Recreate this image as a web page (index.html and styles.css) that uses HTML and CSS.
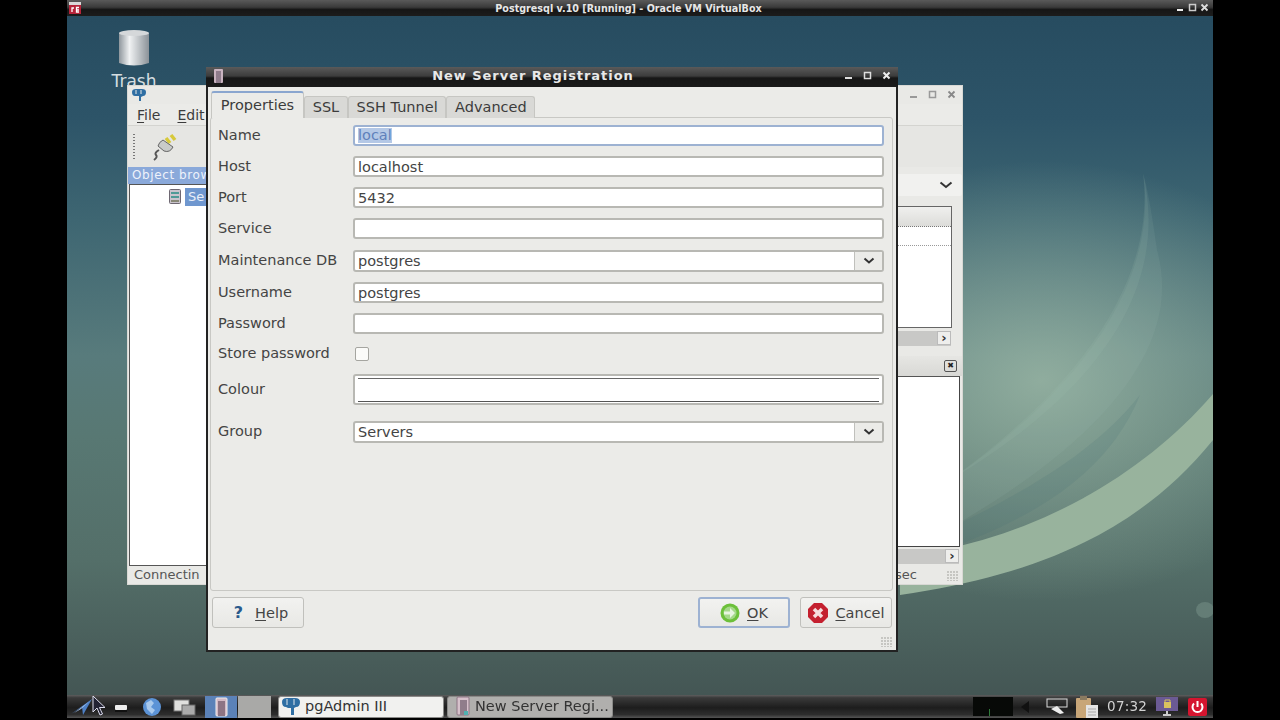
FILE: index.html
```html
<!DOCTYPE html>
<html lang="en">
<head>
    <meta charset="UTF-8">
    <meta name="viewport" content="width=device-width, initial-scale=1.0">
    <title>Postgresql v.10 [Running] - Oracle VM VirtualBox</title>
    <link rel="stylesheet" href="styles.css">
</head>
<body>
    <div class="vm">
        <div class="vm-title">
            <svg class="vm-icon" width="12" height="12" viewBox="0 0 12 12"><rect width="12" height="12" fill="#d8d8d8"/><rect y="3" width="12" height="9" fill="#b5243a"/><path d="M3 10V6h2M7 8h3M10 5.500H7.500V10H10" fill="none" stroke="#fff" stroke-width="1.300"/></svg>
            <span class="vm-title-text">Postgresql v.10 [Running] - Oracle VM VirtualBox</span>
            <div class="vm-controls">
                <svg width="10" height="10" viewBox="0 0 10 10"><rect x="3" y="6" width="6" height="2" fill="#eee"/></svg>
                <svg width="10" height="10" viewBox="0 0 10 10"><rect x="2.500" y="1.500" width="6" height="6" fill="none" stroke="#ccc" stroke-width="1.500"/></svg>
                <svg width="10" height="10" viewBox="0 0 10 10"><path d="M1.500 1.500l6 6M7.500 1.500l-6 6" stroke="#ddd" stroke-width="1.800"/></svg>
            </div>
        </div>

        <div class="desktop">
            <svg class="wallpaper" width="1146" height="680" viewBox="67 16 1146 680">
                <path d="M1143 173C1158 270 1095 380 950 480L950 528C1095 445 1185 350 1157 250C1152 215 1148 190 1143 173Z" fill="#a8c4b8" opacity=".1"/>
                <path d="M1143 173C1155 270 1095 375 950 480C1110 385 1168 280 1143 173Z" fill="#a8c4b8" opacity=".12"/>
                <path d="M950 528C1040 485 1100 445 1140 395C1110 470 1040 515 950 548Z" fill="#3f6b70" opacity=".14"/>
                <path d="M900 556C1010 545 1130 490 1213 394V440C1140 530 1040 575 900 595Z" fill="#98b39d"/>
                <ellipse cx="1205" cy="610" rx="9" ry="8" fill="#647d76"/>
            </svg>

            <div class="trash">
                <svg width="34" height="38" viewBox="0 0 34 38">
                    <defs><linearGradient id="can" x1="0" x2="1" y1="0" y2="0"><stop offset="0" stop-color="#8f979d"/><stop offset=".35" stop-color="#f0f2f3"/><stop offset="1" stop-color="#8b9298"/></linearGradient></defs>
                    <path d="M2 4V34Q17 39 32 34V4Z" fill="url(#can)"/>
                    <ellipse cx="17" cy="4" rx="15" ry="3" fill="#d5d8da"/>
                </svg>
                <span>Trash</span>
            </div>

            <div class="main-win">
                <div class="main-title">
                    <svg width="16" height="14" viewBox="0 0 16 14"><path d="M1 4Q1 1 5 1H11Q15 1 15 4Q15 8 12 8L10 9V13H8V8H6L4 8Q1 8 1 4Z" fill="#2f6ea3"/><path d="M5 2v4M10 2v4" stroke="#e9e9e6" stroke-width="1"/></svg>
                    <div class="win-controls dim">
                        <svg width="10" height="10" viewBox="0 0 10 10"><rect x="1" y="6" width="7" height="2" fill="#999"/></svg>
                        <svg width="10" height="10" viewBox="0 0 10 10"><rect x="1.500" y="1.500" width="6" height="6" fill="none" stroke="#999" stroke-width="1.500"/></svg>
                        <svg width="10" height="10" viewBox="0 0 10 10"><path d="M1.500 1.500l6 6M7.500 1.500l-6 6" stroke="#888" stroke-width="1.800"/></svg>
                    </div>
                </div>
                <div class="menu-bar"><span><u>F</u>ile</span><span><u>E</u>dit</span></div>
                <div class="tool-bar">
                    <div class="grip"></div>
                    <svg width="26" height="28" viewBox="0 0 26 28">
                        <path d="M15 5l4 5M20 2l4 5" stroke="#d7c93a" stroke-width="3.500"/>
                        <path d="M12 7l10 7q-3 6-9 4l-6-5q1-4 5-6Z" fill="#c9cbc9" stroke="#666" stroke-width="1"/>
                        <path d="M8 17q-5 3-3 5t-2 5" fill="none" stroke="#555" stroke-width="2"/>
                    </svg>
                </div>
                <div class="main-body">
                    <div class="browser">
                        <div class="browser-head">Object brow</div>
                        <div class="tree">
                            <svg width="12" height="15" viewBox="0 0 12 15"><rect x=".5" y=".5" width="11" height="14" rx="1" fill="#c9c3cc" stroke="#6e6872"/><path d="M2 4h8M2 8h8" stroke="#4f9a96" stroke-width="2"/><path d="M2 12h8" stroke="#887" stroke-width="2"/></svg>
                            <span class="tree-sel">Se</span>
                        </div>
                    </div>
                    <div class="side">
                        <div class="side-combo"><svg class="chev" width="14" height="8" viewBox="0 0 14 8"><path d="M1.500 1.500L7 6l5.500-4.500" fill="none" stroke="#333" stroke-width="2"/></svg></div>
                        <div class="side-list">
                            <div class="side-list-head"></div>
                            <div class="side-list-row"></div>
                        </div>
                        <div class="side-scroll"><span class="scroll-btn">&rsaquo;</span></div>
                        <div class="pane-head"><span class="pane-close">&#10006;</span></div>
                        <div class="pane-white"></div>
                        <div class="pane-scroll"><span class="scroll-btn">&rsaquo;</span></div>
                    </div>
                </div>
                <div class="status-bar"><span>Connectin</span><span>sec</span></div>
                <div class="resize-grip"></div>
            </div>

            <div class="dialog">
                <div class="dialog-title">
                    <svg width="11" height="14" viewBox="0 0 11 14"><rect x="1" y="0" width="9" height="14" rx="1" fill="#c9b3c0"/><rect x="3" y="2" width="5" height="12" fill="#8f7c8c"/></svg>
                    <span class="dialog-title-text">New Server Registration</span>
                    <div class="win-controls">
                        <svg width="10" height="10" viewBox="0 0 10 10"><rect x="1" y="6" width="7" height="2" fill="#ddd"/></svg>
                        <svg width="10" height="10" viewBox="0 0 10 10"><rect x="1.500" y="1.500" width="6" height="6" fill="none" stroke="#ddd" stroke-width="1.500"/></svg>
                        <svg width="10" height="10" viewBox="0 0 10 10"><path d="M1.500 1.500l6 6M7.500 1.500l-6 6" stroke="#eee" stroke-width="2"/></svg>
                    </div>
                </div>

                <div class="tabs">
                    <div class="tab tab-active">Properties</div>
                    <div class="tab">SSL</div>
                    <div class="tab">SSH Tunnel</div>
                    <div class="tab">Advanced</div>
                </div>

                <div class="panel">
                    <div class="row">
                        <label>Name</label>
                        <div class="field field-focus"><span class="selected">local</span></div>
                    </div>
                    <div class="row">
                        <label>Host</label>
                        <div class="field">localhost</div>
                    </div>
                    <div class="row">
                        <label>Port</label>
                        <div class="field">5432</div>
                    </div>
                    <div class="row">
                        <label>Service</label>
                        <div class="field"></div>
                    </div>
                    <div class="row row-combo">
                        <label>Maintenance DB</label>
                        <div class="field combo">
                            <span class="combo-value">postgres</span>
                            <span class="combo-btn"><svg width="12" height="8" viewBox="0 0 12 8"><path d="M1.500 1.500L6 5.500l4.500-4" fill="none" stroke="#333" stroke-width="2"/></svg></span>
                        </div>
                    </div>
                    <div class="row">
                        <label>Username</label>
                        <div class="field">postgres</div>
                    </div>
                    <div class="row">
                        <label>Password</label>
                        <div class="field"></div>
                    </div>
                    <div class="row row-check">
                        <label>Store password</label>
                        <span class="check"></span>
                    </div>
                    <div class="row row-colour">
                        <label>Colour</label>
                        <div class="field colour"><div class="colour-inner"></div></div>
                    </div>
                    <div class="row row-combo row-group">
                        <label>Group</label>
                        <div class="field combo">
                            <span class="combo-value">Servers</span>
                            <span class="combo-btn"><svg width="12" height="8" viewBox="0 0 12 8"><path d="M1.500 1.500L6 5.500l4.500-4" fill="none" stroke="#333" stroke-width="2"/></svg></span>
                        </div>
                    </div>
                </div>

                <div class="footer">
                    <div class="btn btn-help"><span class="help-mark">?</span><span><u>H</u>elp</span></div>
                    <div class="footer-right">
                        <div class="btn btn-default">
                            <svg width="20" height="20" viewBox="0 0 20 20"><circle cx="10" cy="10" r="9.500" fill="#6cc03a"/><circle cx="10" cy="10" r="6.500" fill="#a5d98a"/><path d="M4 8.500h6V5l5 5-5 5v-3.500H4Z" fill="#e8f5e0"/></svg>
                            <span><u>O</u>K</span>
                        </div>
                        <div class="btn btn-cancel">
                            <svg width="22" height="22" viewBox="0 0 22 22"><path d="M7 1h8l6 6v8l-6 6H7l-6-6V7Z" fill="#c4202f"/><path d="M7 7l8 8M15 7l-8 8" stroke="#f6dcdc" stroke-width="3.500"/></svg>
                            <span><u>C</u>ancel</span>
                        </div>
                    </div>
                </div>
                <div class="resize-grip"></div>
            </div>
        </div>

        <div class="taskbar">
            <svg class="start" width="24" height="18" viewBox="0 0 24 18"><path d="M1 16L22 1 13 17 12 9Z" fill="#4d7fc4"/><path d="M4 15L20 3 11 11Z" fill="#a9c8f0"/></svg>
            <svg class="launch launch-min" width="18" height="12" viewBox="0 0 18 12"><rect x="2" y="4" width="12" height="5" rx="1" fill="#eee"/><rect x="2" y="9" width="12" height="2" fill="#111"/></svg>
            <svg class="launch" width="22" height="20" viewBox="0 0 22 20"><circle cx="11" cy="10" r="9" fill="#5c93d6"/><path d="M5 6l5-3 3 3-3 4 4 3-3 4-5-5Z" fill="#a9c9ec"/></svg>
            <svg class="launch" width="24" height="18" viewBox="0 0 24 18"><rect x="1" y="2" width="15" height="11" fill="#e0e0de" stroke="#777"/><rect x="9" y="7" width="13" height="10" fill="#aaa" stroke="#666"/></svg>
            <div class="quick-active"><svg width="13" height="20" viewBox="0 0 13 20"><rect x="1" y="1" width="11" height="18" rx="1" fill="#d4b9c4" stroke="#eee"/><rect x="3" y="4" width="7" height="15" fill="#8d7484"/></svg></div>
            <div class="quick-gray"></div>
            <div class="task task-active">
                <svg width="20" height="19" viewBox="0 0 20 19"><path d="M1 5Q1 1 6 1H14Q19 1 19 5Q19 10 15 10L13 11V18H10V11H7L5 10Q1 10 1 5Z" fill="#2f6ea3"/><path d="M6 2v6M13 2v6" stroke="#dfe6ec" stroke-width="1"/></svg>
                <span>pgAdmin III</span>
            </div>
            <div class="task">
                <svg width="14" height="20" viewBox="0 0 14 20"><rect x="1" y="1" width="12" height="18" rx="1" fill="#d6c1cb" stroke="#8d7484"/><rect x="4" y="4" width="7" height="15" fill="#907d8b"/><rect x="8" y="15" width="4" height="4" fill="#4fb0b0"/></svg>
                <span>New Server Regi...</span>
            </div>
            <div class="tray">
                <div class="net-graph"><span class="net-tick"></span></div>
                <svg class="tray-arrow" width="10" height="14" viewBox="0 0 10 14"><path d="M9 1v12L1 7Z" fill="#111"/></svg>
                <svg class="tray-net" width="24" height="18" viewBox="0 0 24 18"><rect x="2" y="1" width="20" height="8" fill="none" stroke="#ddd"/><path d="M6 11l6-3 7 7-4 1Z" fill="#eee"/></svg>
                <svg class="tray-clip" width="24" height="24" viewBox="0 0 24 24"><rect x="1" y="3" width="15" height="20" rx="1" fill="#c8a678"/><rect x="5" y="1" width="7" height="4" fill="#8a7a60"/><rect x="11" y="10" width="12" height="13" fill="#e4e4e4"/><path d="M13 14h8M13 17h8M13 20h8" stroke="#aaa"/></svg>
                <span class="clock">07:32</span>
                <svg class="tray-lock" width="24" height="22" viewBox="0 0 24 22"><rect x="1" y="1" width="22" height="14" fill="#6b5a94"/><rect x="9" y="6" width="7" height="6" fill="#d8c25e"/><path d="M10 6V4h5v2" fill="none" stroke="#d8c25e"/><path d="M8 19h8M12 15v4" stroke="#ccc" stroke-width="2"/></svg>
                <svg class="tray-power" width="19" height="18" viewBox="0 0 19 18"><rect width="19" height="18" rx="2" fill="#d5152f"/><path d="M6 5.500a5 5 0 1 0 7 0M9.500 3v6" fill="none" stroke="#fff" stroke-width="2"/></svg>
            </div>
            <svg class="cursor" width="14" height="22" viewBox="0 0 14 22"><path d="M1 1V17L5 13 8 20 10.500 19 7.500 12.500H13Z" fill="#223" stroke="#dde" stroke-width="1"/></svg>
        </div>
    </div>
</body>
</html>
```

FILE: styles.css
```css
html, body {
    margin: 0;
    height: 100%;
    background-color: #000;
    overflow: hidden;
}
body {
    display: flex;
    justify-content: center;
    font-family: "DejaVu Sans", sans-serif;
    font-size: 14.5px;
    color: #444;
}
u {
    text-underline-offset: 2px;
}
.vm {
    width: 1146px;
    height: 718px;
    display: flex;
    flex-direction: column;
    filter: blur(0.7px);
}

/* virtualbox title */
.vm-title {
    height: 16px;
    flex: none;
    display: flex;
    align-items: center;
    padding: 0 3px 0 2px;
    background: linear-gradient(#5a5a5a, #3a3a3a 45%, #161616 60%, #1c1c1c);
}
.vm-title-text {
    flex: 1;
    text-align: center;
    padding-left: 2px;
    color: #e6e6e6;
    font-size: 9.6px;
    font-weight: bold;
}
.vm-controls {
    display: flex;
    gap: 3px;
}

/* desktop */
.desktop {
    flex: none;
    height: 679px;
    position: relative;
    overflow: hidden;
    background:
        radial-gradient(ellipse 300px 220px at 975px 365px, rgba(165, 192, 172, 0.72), rgba(165, 192, 172, 0)),
        linear-gradient(#274c60, #2d5468 15%, #3e6672 30%, #587b7c 50%, #587873 62%, #546f69 80%, #445654);
}
.wallpaper {
    position: absolute;
    left: 0;
    top: 0;
}
.trash {
    position: absolute;
    left: 37px;
    top: 13px;
    width: 60px;
    display: flex;
    flex-direction: column;
    align-items: center;
    color: #d4dde0;
    font-size: 17px;
    line-height: 20px;
}
.trash svg {
    margin-bottom: 4px;
}

/* pgadmin main window */
.main-win {
    position: absolute;
    left: 60px;
    top: 69px;
    width: 836px;
    height: 500px;
    display: flex;
    flex-direction: column;
    background-color: #e9e9e6;
    box-sizing: border-box;
    border: 1px solid #d8d8d4;
}
.main-title {
    height: 18px;
    flex: none;
    display: flex;
    align-items: center;
    justify-content: space-between;
    padding: 0 5px 0 3px;
}
.win-controls {
    display: flex;
    gap: 9px;
}
.menu-bar {
    height: 21px;
    flex: none;
    display: flex;
    align-items: center;
    gap: 17px;
    padding-left: 9px;
    font-size: 14px;
    color: #3c3c3c;
    background-color: #ebebe8;
    border-bottom: 1px solid #d4d4d0;
}
.tool-bar {
    height: 41px;
    flex: none;
    display: flex;
    align-items: center;
    gap: 16px;
    padding-left: 5px;
    background-color: #e6e6e3;
}
.grip {
    width: 2px;
    height: 26px;
    background: repeating-linear-gradient(#777 0 1px, transparent 1px 3px);
}
.main-body {
    flex: 1;
    min-height: 0;
    display: flex;
}
.browser {
    width: 760px;
    flex: none;
    display: flex;
    flex-direction: column;
}
.browser-head {
    height: 17px;
    flex: none;
    padding-left: 4px;
    background-color: #8aa9da;
    color: #eef2fa;
    font-size: 12px;
    line-height: 16px;
    letter-spacing: 0.6px;
}
.tree {
    flex: 1;
    margin-left: 1px;
    display: flex;
    align-items: flex-start;
    gap: 4px;
    padding: 4px 0 0 39px;
    background-color: #fff;
    border: 1px solid #555;
}
.tree-sel {
    width: 60px;
    background-color: #6f97cf;
    color: #e8eef8;
    font-size: 13px;
    padding: 0 3px;
    margin-top: -1px;
    height: 18px;
    line-height: 18px;
}
.side {
    flex: 1;
    padding-top: 7px;
    display: flex;
    flex-direction: column;
    margin-left: -51px;
    position: relative;
}
.side-combo {
    height: 22px;
    flex: none;
    display: flex;
    align-items: center;
    justify-content: flex-end;
    padding-right: 9px;
    background-color: #f1f1ef;
    border-radius: 2px;
}
.side-list {
    height: 122px;
    flex: none;
    margin: 10px 10px 0 0;
    box-sizing: border-box;
    border: 1px solid #666;
    background-color: #fff;
}
.side-list-head {
    height: 19px;
    background: linear-gradient(#f0f0ee, #dcdcd9);
    border-bottom: 1px dotted #777;
}
.side-list-row {
    height: 18px;
    border-bottom: 1px dotted #999;
}
.side-scroll {
    height: 15px;
    flex: none;
    margin: 3px 11px 0 0;
    display: flex;
    justify-content: flex-end;
    background-color: #c8c8c6;
}
.scroll-btn {
    width: 14px;
    height: 14px;
    box-sizing: border-box;
    text-align: center;
    font-size: 13px;
    line-height: 12px;
    font-weight: bold;
    color: #333;
    background-color: #eeeeec;
    border: 1px solid #bbb;
}
.pane-head {
    height: 20px;
    flex: none;
    margin-top: 10px;
    display: flex;
    align-items: center;
    justify-content: flex-end;
    padding-right: 5px;
    background: linear-gradient(#e6e6e3, #d8d8d5);
}
.pane-close {
    width: 13px;
    height: 12px;
    box-sizing: border-box;
    border: 1px solid #555;
    border-radius: 2px;
    font-size: 8px;
    line-height: 10px;
    text-align: center;
    color: #222;
}
.pane-white {
    flex: 1;
    margin-right: 2px;
    background-color: #fff;
    border-top: 1px solid #555;
    border-right: 1px solid #444;
    border-bottom: 1px solid #444;
}
.pane-scroll {
    height: 15px;
    flex: none;
    margin: 2px 3px 2px 0;
    display: flex;
    justify-content: flex-end;
    background-color: #c8c8c6;
}
.status-bar {
    height: 18px;
    flex: none;
    padding: 0 45px 0 6px;
    font-size: 13px;
    line-height: 18px;
    color: #555;
    white-space: nowrap;
    background-color: #e9e9e6;
    display: flex;
    justify-content: space-between;
}

/* new server dialog */
.dialog {
    position: absolute;
    left: 139px;
    top: 51px;
    width: 692px;
    height: 585px;
    box-sizing: border-box;
    display: flex;
    flex-direction: column;
    background-color: #ebebe8;
    border: 2px solid #222;
    border-top: none;
}
.dialog-title {
    height: 20px;
    box-sizing: border-box;
    flex: none;
    margin: 0 -2px;
    padding: 0 6px 3px 7px;
    display: flex;
    align-items: center;
    background: linear-gradient(#5a5a5a, #3c3c3c 45%, #161616 55%, #1a1a1a);
}
.dialog-title-text {
    flex: 1;
    text-align: center;
    padding-right: 2px;
    color: #e8e8e8;
    font-size: 13px;
    font-weight: bold;
    letter-spacing: 0.95px;
}
.tabs {
    height: 27px;
    flex: none;
    margin-top: 4px;
    padding-left: 3px;
    display: flex;
    align-items: flex-end;
    position: relative;
    z-index: 1;
    margin-bottom: -1px;
}
.tab {
    height: 22px;
    padding: 0 7.7px;
    box-sizing: border-box;
    line-height: 20px;
    background-color: #d9d9d6;
    border: 1px solid #c6c6c2;
    border-bottom: none;
    border-radius: 3px 3px 0 0;
    color: #3c3c3c;
}
.tab-active {
    height: 27px;
    width: 93px;
    padding: 0;
    text-align: center;
    line-height: 25px;
    background-color: #ebebe8;
    border-top: 2px solid #8aa6cf;
}
.panel {
    height: 474px;
    flex: none;
    margin: 0 3px 0 2px;
    padding: 7px 8px 0 7px;
    box-sizing: border-box;
    display: flex;
    flex-direction: column;
    gap: 10px;
    border: 1px solid #c8c8c4;
    border-radius: 3px;
}
.row {
    height: 21px;
    flex: none;
    display: flex;
    align-items: center;
}
.row label {
    width: 135px;
    flex: none;
    padding-bottom: 2px;
    color: #444;
}
.row-combo {
    height: 22px;
    margin-top: 1px;
}
.row-check {
    height: 20px;
}
.row-colour {
    height: 31px;
}
.row-group {
    margin-top: 6px;
}
.field {
    flex: 1;
    height: 100%;
    box-sizing: border-box;
    padding-left: 3px;
    display: flex;
    align-items: center;
    background-color: #fff;
    border: 2px solid #b8b8b3;
    border-radius: 3px;
    color: #444;
    white-space: nowrap;
}
.field-focus {
    border-color: #9db2d2;
}
.selected {
    background-color: #b4c8e6;
    color: #5f80bb;
    line-height: 15px;
}
.combo {
    padding-right: 0;
    justify-content: space-between;
}
.combo-btn {
    width: 27px;
    height: 100%;
    flex: none;
    display: flex;
    align-items: center;
    justify-content: center;
    background-color: #ebebe8;
    border-left: 1px solid #c0c0bc;
    border-radius: 0 2px 2px 0;
}
.check {
    width: 12px;
    height: 12px;
    margin-left: 2px;
    background-color: #fbfbf9;
    border: 1px solid #a5a5a0;
    border-radius: 2px;
}
.colour {
    padding: 2px 3px 1px;
    align-items: stretch;
}
.colour-inner {
    flex: 1;
    border-top: 1px solid #666;
    border-bottom: 1px solid #555;
}
.footer {
    flex: none;
    margin-top: 6px;
    padding: 0 4px;
    display: flex;
    justify-content: space-between;
}
.footer-right {
    display: flex;
    gap: 10px;
}
.btn {
    width: 92px;
    height: 31px;
    box-sizing: border-box;
    display: flex;
    align-items: center;
    justify-content: center;
    gap: 7px;
    background: linear-gradient(#f2f2f0, #e8e8e5);
    border: 1px solid #c0c0bc;
    border-radius: 3px;
    color: #444;
}
.btn-help {
    padding-left: 6px;
}
.btn-default {
    border: 2px solid #9db2d2;
}
.btn-cancel {
    gap: 6px;
}
.help-mark {
    color: #2a5a8c;
    font-weight: bold;
    font-size: 16px;
    margin-right: 5px;
}
.resize-grip {
    position: absolute;
    right: 3px;
    bottom: 3px;
    width: 12px;
    height: 10px;
    background: radial-gradient(circle at 1px 1px, #c6c6c2 1px, transparent 1.2px) 0 0 / 3px 3px;
}

/* bottom panel */
.taskbar {
    height: 23px;
    flex: none;
    position: relative;
    display: flex;
    align-items: center;
    background: linear-gradient(#5e5e5e, #3a3a3a 12%, #1d1d1d 55%, #2d2d2d 85%, #555);
    padding-left: 3px;
    color: #333;
}
.launch {
    flex: none;
    margin-left: 10px;
}
.launch-min {
    margin-left: 19px;
}
.quick-active {
    width: 32px;
    height: 22px;
    margin-left: 8px;
    display: flex;
    align-items: center;
    justify-content: center;
    background-color: #5b82b8;
}
.quick-gray {
    width: 33px;
    height: 22px;
    margin-left: 1px;
    background-color: #a9a9a7;
}
.task {
    width: 166px;
    height: 22px;
    box-sizing: border-box;
    margin-left: 3px;
    padding: 0 0 1px 8px;
    display: flex;
    align-items: center;
    gap: 5px;
    background-color: #b0afad;
    border: 1px solid #8a8a88;
    border-radius: 3px;
    white-space: nowrap;
    color: #333;
}
.task-active {
    margin-left: 7px;
    gap: 4px;
    padding-left: 2px;
    background-color: #f1f1ef;
}
.tray {
    margin-left: auto;
    padding-right: 6px;
    display: flex;
    align-items: center;
}
.net-graph {
    width: 40px;
    height: 19px;
    background-color: #070907;
    display: flex;
    align-items: flex-end;
    padding-left: 16px;
    box-sizing: border-box;
}
.net-tick {
    width: 1px;
    height: 7px;
    background-color: #2f7a3a;
}
.tray-arrow {
    margin-left: 7px;
}
.tray-net {
    margin-left: 15px;
}
.tray-clip {
    margin-left: 6px;
}
.clock {
    margin-left: 8px;
    margin-bottom: 2px;
    color: #d2d2d2;
    font-size: 13.5px;
    letter-spacing: 0.2px;
}
.tray-lock {
    margin-left: 8px;
}
.tray-power {
    margin-left: 9px;
}
.cursor {
    position: absolute;
    left: 25px;
    top: 0;
}
```
